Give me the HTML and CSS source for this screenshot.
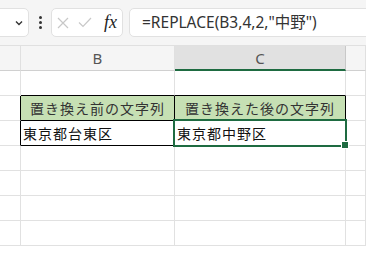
FILE: index.html
```html
<!DOCTYPE html>
<html lang="ja">
<head>
    <meta charset="UTF-8">
    <title>REPLACE</title>
    <link rel="stylesheet" href="styles.css">
</head>
<body>
    <div class="topbar">
        <div class="namebox">
            <svg class="chev" width="8" height="6" viewBox="0 0 8 6"><path d="M1 1.5 L4 4.5 L7 1.5" fill="none" stroke="#333" stroke-width="1.4"/></svg>
        </div>
        <div class="dots"><span></span><span></span><span></span></div>
        <div class="btns">
            <svg width="12" height="12" viewBox="0 0 12 12"><path d="M1 1 L11 11 M11 1 L1 11" stroke="#c8c8c8" stroke-width="1.2"/></svg>
            <svg width="14" height="11" viewBox="0 0 14 11"><path d="M1 5.5 L5 9.5 L13 1" fill="none" stroke="#c8c8c8" stroke-width="1.2"/></svg>
            <span class="fx">fx</span>
        </div>
        <div class="formula">=REPLACE(B3,4,2,"中野")</div>
    </div>

    <div class="grid">
        <!-- column headers -->
        <div class="hd"></div>
        <div class="hd">B</div>
        <div class="hd sel">C</div>
        <div class="hd"></div>

        <!-- row 1 -->
        <div class="c"></div>
        <div class="c bb"></div>
        <div class="c bb"></div>
        <div class="c"></div>

        <!-- row 2 -->
        <div class="c br"></div>
        <div class="c th br bb">置き換え前の文字列</div>
        <div class="c th br bb">置き換えた後の文字列</div>
        <div class="c"></div>

        <!-- row 3 -->
        <div class="c br"></div>
        <div class="c br bb">東京都台東区</div>
        <div class="c br bb active">東京都中野区<i class="selbox"></i><i class="handle"></i></div>
        <div class="c"></div>

        <div class="c"></div><div class="c"></div><div class="c"></div><div class="c"></div>
        <div class="c"></div><div class="c"></div><div class="c"></div><div class="c"></div>
        <div class="c"></div><div class="c"></div><div class="c"></div><div class="c"></div>
        <div class="c"></div><div class="c"></div><div class="c"></div><div class="c"></div>
    </div>
</body>
</html>
```

FILE: styles.css
```css
body { margin: 0; background: #fff; font-family: "Noto Sans", "Noto Sans CJK JP", sans-serif; overflow: hidden; }

.topbar { height: 45px; background: #f5f5f5; border-bottom: 1px solid #e0e0e0; display: flex; align-items: center; }
.namebox { width: 38px; height: 29px; margin-left: -9px; background: #fff; border: 1px solid #e1e1e1; border-radius: 5px; display: flex; align-items: center; justify-content: flex-end; padding-right: 5px; box-sizing: border-box; }
.chev { display: block; }
.dots { width: 22px; display: flex; flex-direction: column; align-items: center; gap: 2px; }
.dots span { width: 3px; height: 3px; background: #333; border-radius: 50%; }
.btns { width: 72px; height: 29px; box-sizing: border-box; background: #fff; border: 1px solid #e1e1e1; border-radius: 5px; display: flex; align-items: center; padding-left: 5px; gap: 9px; }
.fx { font-family: "Liberation Serif", serif; font-style: italic; font-size: 18px; color: #222; margin-left: 3px; }
.formula { flex: 1; height: 29px; box-sizing: border-box; margin-left: 6px; margin-right: -10px; background: #fff; border: 1px solid #e1e1e1; border-radius: 5px; padding-left: 12px; font-size: 15.5px; color: #333; line-height: 27px; }

.grid { display: grid; grid-template-columns: 21px 154px 171px 1fr; grid-auto-rows: 25px; }
.hd { background: #f5f5f5; border-right: 1px solid #e0e0e0; border-bottom: 1px solid #d0d0d0; display: flex; align-items: center; justify-content: center; font-size: 15px; color: #555; }
.hd.sel { background: #e1e1e1; border-right-color: #c8c8c8; border-bottom: 2px solid #1e6b41; }
.c { border-right: 1px solid #e1e1e1; border-bottom: 1px solid #e1e1e1; font-family: "Noto Sans CJK JP", sans-serif; font-size: 14px; letter-spacing: 1px; line-height: 25px; padding-left: 2px; color: #111; white-space: nowrap; }
.c.br { border-right-color: #000; }
.c.bb { border-bottom-color: #000; }
.th { background: #c6e0b4; text-align: center; padding-left: 0; color: #333; }

.active { position: relative; }
.selbox { position: absolute; left: -2px; top: -2px; right: -2px; bottom: -2px; border: 2px solid #1e6b41; }
.handle { position: absolute; right: -4px; bottom: -4px; width: 6px; height: 6px; background: #1e6b41; border: 1px solid #fff; }
```
